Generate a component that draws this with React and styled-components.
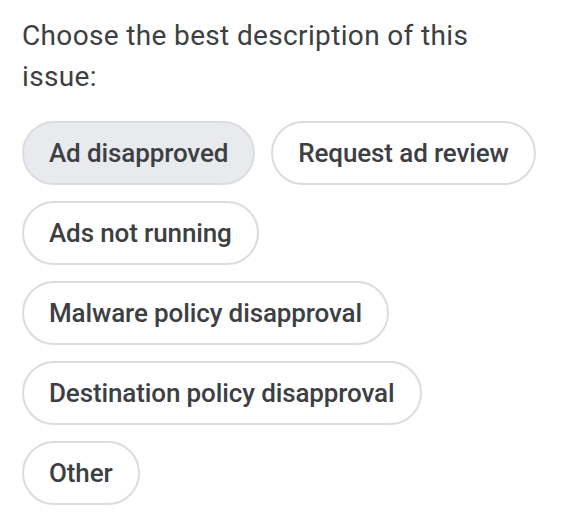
import React, { useState } from 'react'
import styled, { createGlobalStyle } from 'styled-components'

const GlobalStyle = createGlobalStyle`
  body {
    margin: 0;
    background: #ffffff;
    font-family: Roboto, "Liberation Sans", Arial, sans-serif;
  }
`

const Wrapper = styled.div`
  padding: 15px 24px 0 22px;
`

const Question = styled.p`
  margin: 0 0 24px;
  font-size: 28px;
  line-height: 41px;
  font-weight: 400;
  color: #3c4043;
  letter-spacing: 0.35px;
  max-width: 480px;
`

const ChipList = styled.div`
  display: flex;
  flex-wrap: wrap;
  gap: 16px;
`

const Chip = styled.button`
  box-sizing: border-box;
  display: inline-flex;
  align-items: center;
  height: 64px;
  padding: 0 25px;
  border: 2px solid #dadce0;
  border-radius: 32px;
  background: ${p => (p.$selected ? '#e8eaed' : '#ffffff')};
  color: #3c4043;
  font-family: Roboto, "Liberation Sans", Arial, sans-serif;
  font-size: 26px;
  font-weight: 500;
  letter-spacing: -0.12px;
  cursor: pointer;
`

const options = [
  'Ad disapproved',
  'Request ad review',
  'Ads not running',
  'Malware policy disapproval',
  'Destination policy disapproval',
  'Other',
]

export default function App() {
  const [selected, setSelected] = useState('Ad disapproved')
  return (
    <Wrapper>
      <GlobalStyle />
      <Question>Choose the best description of this issue:</Question>
      <ChipList>
        {options.map(o => (
          <Chip key={o} $selected={o === selected} onClick={() => setSelected(o)}>
            {o}
          </Chip>
        ))}
      </ChipList>
    </Wrapper>
  )
}
